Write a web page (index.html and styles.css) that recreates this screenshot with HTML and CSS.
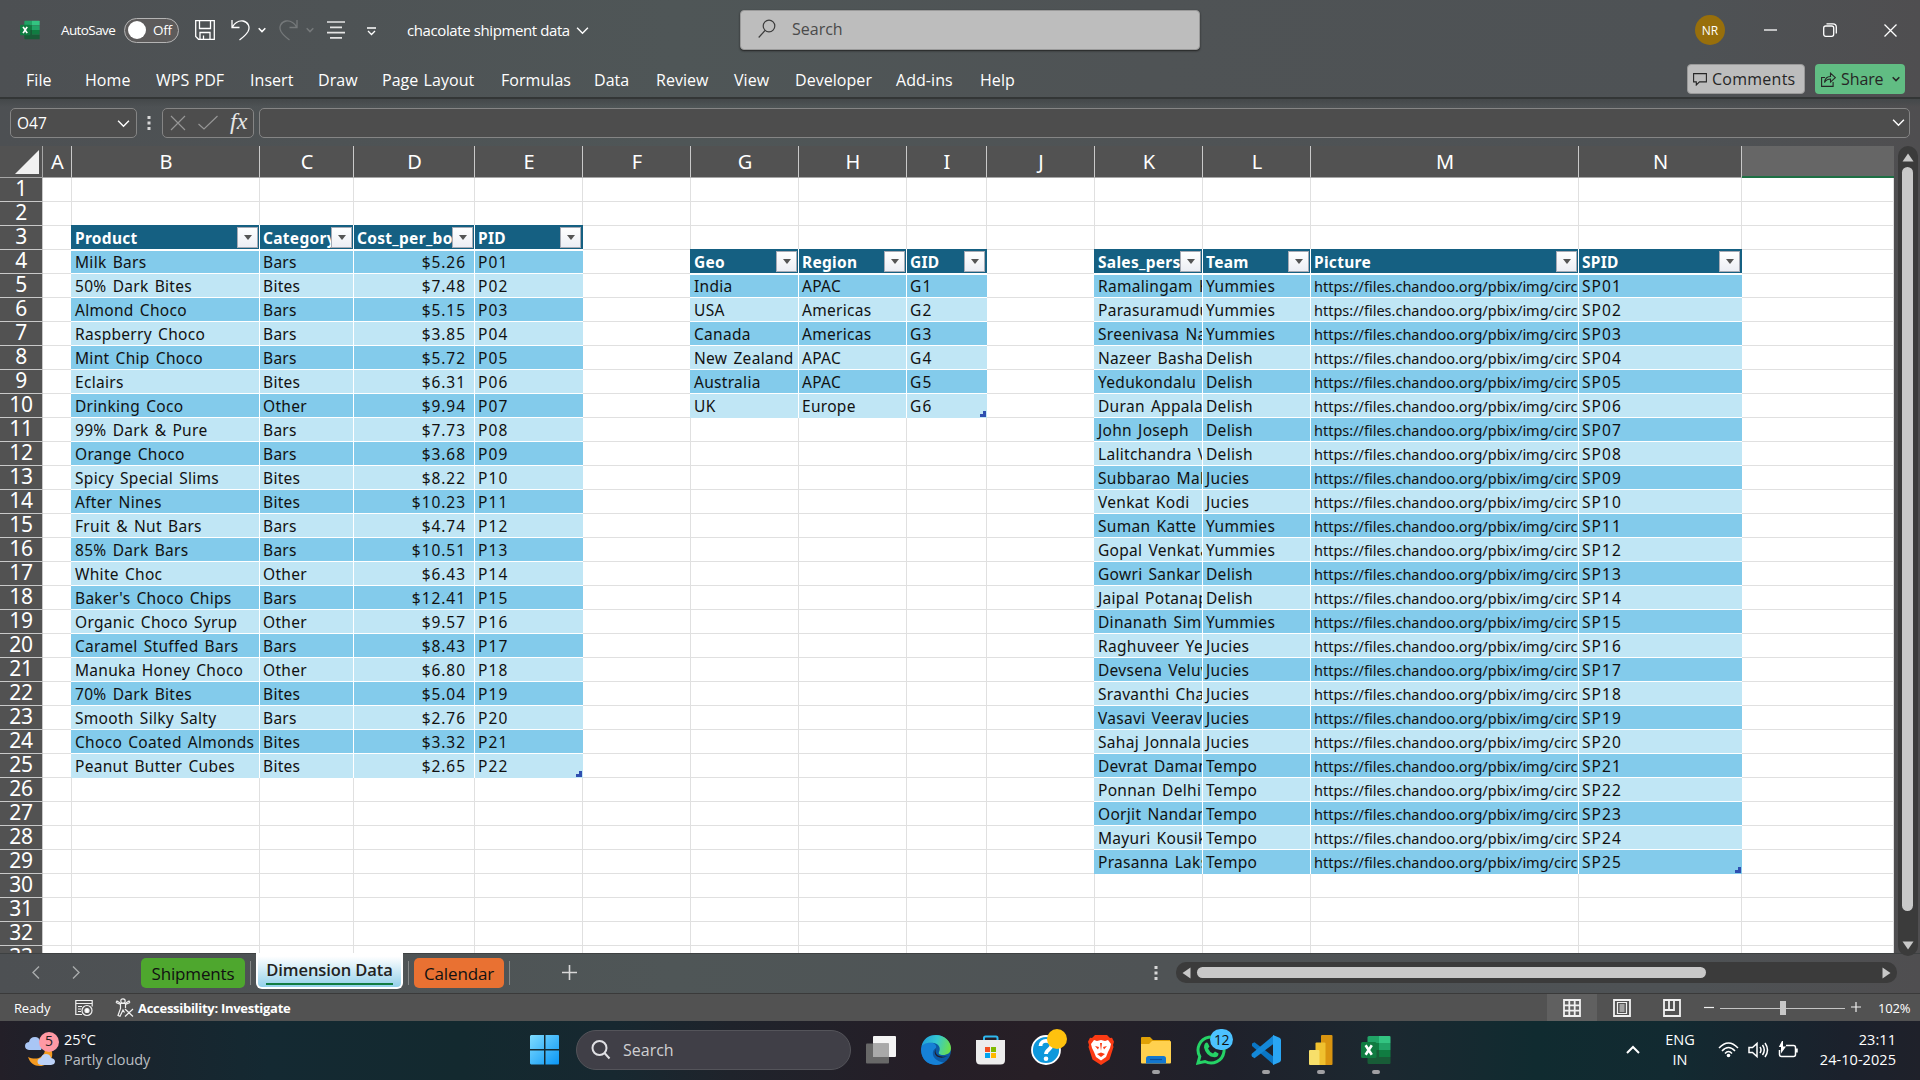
FILE: index.html
```
<!DOCTYPE html>
<html lang="en">
<head>
<meta charset="utf-8">
<title>chacolate shipment data - Excel</title>
<link rel="stylesheet" href="styles.css">
</head>
<body>
<svg class="defs" width="0" height="0" aria-hidden="true">
  <defs>
    <symbol id="excel" viewBox="0 0 30 30">
      <path fill="#21a366" d="M8 1h10v7H6.500V2.500Q6.500 1 8 1z"/>
      <path fill="#33c481" d="M18 1h10.500q1 0 1 1v6H18z"/>
      <path fill="#107c41" d="M6.500 8H18v7H6.500z"/>
      <path fill="#21a366" d="M18 8h11.500v7H18z"/>
      <path fill="#185c37" d="M6.500 15H18v7h11.500v6q0 1-1 1H8q-1.500 0-1.500-1.500z"/>
      <path fill="#107c41" d="M18 15h11.500v7H18z"/>
      <rect x="0" y="7" width="15.500" height="16" rx="1.500" fill="#107c41"/>
      <path fill="none" stroke="#fff" stroke-width="2.600" d="M4.600 10.300l6.200 9.400M10.800 10.300l-6.200 9.400"/>
    </symbol>
    <symbol id="chev" viewBox="0 0 12 12"><path d="M1 3.500l5 5 5-5" fill="none" stroke="currentColor" stroke-width="1.300"/></symbol>
    <symbol id="chevs" viewBox="0 0 8 8"><path d="M.7 2.200L4 5.600l3.300-3.400" fill="none" stroke="currentColor" stroke-width="1.500"/></symbol>
  </defs>
</svg>

<div class="window">
  <header class="titlebar">
    <svg width="20" height="20"><use href="#excel"/></svg>
    <span class="autosave">AutoSave</span>
    <span class="toggle"><i></i><b>Off</b></span>
    <svg width="20" height="20" viewBox="0 0 20 20" class="line"><path d="M.7.700h18.600v18.600H3.500L.7 16.500zM4.500.700v7.800h11V.700M5 19v-6.500h10V19M8.500 19v-3.500"/></svg>
    <svg width="19" height="22" viewBox="0 0 19 22" class="line"><path d="M1 1v7.500h7.500M1.300 8.200C4 3.500 8 1.500 12 2c5 .8 7.500 6 5 10.500-1.500 2.500-4.500 5.500-8.500 8.500"/></svg>
    <svg width="8" height="8"><use href="#chevs"/></svg>
    <svg width="19" height="22" viewBox="0 0 19 22" class="line faint"><path d="M18 1v7.500h-7.500M17.700 8.200C15 3.500 11 1.500 7 2 2 2.800-.5 8 2 12.500c1.500 2.500 4.500 5.500 8.500 8.500"/></svg>
    <svg width="8" height="8" class="faint"><use href="#chevs"/></svg>
    <svg width="18" height="18" viewBox="0 0 18 18" class="line thick"><path d="M0 1h18M3 6.300h12M0 11.600h18M3 16.900h12"/></svg>
    <svg width="9" height="9" viewBox="0 0 9 9" class="line down"><path d="M0 1h9M1 4l3.500 3.500L8 4"/></svg>
    <span class="doc">chacolate shipment data</span>
    <svg width="13" height="13"><use href="#chev"/></svg>
    <div class="search">
      <svg width="18" height="20" viewBox="0 0 18 20"><circle cx="11" cy="7" r="5.800"/><path d="M7 11.500L.7 18.500"/></svg>
      <span>Search</span>
    </div>
    <span class="avatar">NR</span>
    <svg width="13" height="13" viewBox="0 0 13 13" class="line"><path d="M0 6h13"/></svg>
    <svg width="14" height="14" viewBox="0 0 14 14" class="line"><rect x=".7" y="3" width="10" height="10.300" rx="2"/><path d="M3.500.8h6.500q3.300 0 3.300 3.300v6.500"/></svg>
    <svg width="13" height="13" viewBox="0 0 13 13" class="line"><path d="M.5.500l12 12M12.500.500l-12 12"/></svg>
  </header>

  <nav class="ribbon">
    <div class="tabs">
      <span>File</span><span>Home</span><span>WPS PDF</span><span>Insert</span><span>Draw</span><span>Page Layout</span><span>Formulas</span><span>Data</span><span>Review</span><span>View</span><span>Developer</span><span>Add-ins</span><span>Help</span>
    </div>
    <button class="btn comments"><svg width="14" height="14" viewBox="0 0 14 14"><path d="M.6 1.600h12.800v8.300H6.500L3.300 13V9.900H.6z"/></svg>Comments</button>
    <button class="btn share"><svg width="15" height="15" viewBox="0 0 15 15"><path d="M4 5.500H.6v8.900h11.500V10M3.500 10.500C4 6.500 6 4.500 9.500 4.500V1.200l4.800 4.500-4.800 4.400V7C7 7 5 8 3.500 10.500z"/></svg>Share<svg width="8" height="8" class="sc"><use href="#chevs"/></svg></button>
  </nav>

  <section class="formulabar">
    <div class="namebox"><span>O47</span><svg width="13" height="13"><use href="#chev"/></svg></div>
    <svg class="dots" width="4" height="14" viewBox="0 0 4 14"><path d="M.5 0h3v3h-3zM.5 5.500h3v3h-3zM.5 11h3v3h-3z"/></svg>
    <div class="fx">
      <svg width="16" height="16" viewBox="0 0 16 16"><path d="M1 1l14 14M15 1L1 15"/></svg>
      <svg width="20" height="16" viewBox="0 0 20 16"><path d="M.5 9l5.500 5L19.500 1"/></svg>
      <em>fx</em>
    </div>
    <div class="formula"><svg width="13" height="13"><use href="#chev"/></svg></div>
  </section>

  <main class="workspace">
    <div class="sheet" id="sheet"></div>
    <div class="vscroll">
      <svg width="12" height="9" viewBox="0 0 12 9"><path d="M6 .5L11.500 8.500H.5z"/></svg>
      <i></i>
      <svg width="12" height="9" viewBox="0 0 12 9"><path d="M6 8.500L11.500.5H.5z"/></svg>
    </div>
  </main>

  <section class="tabbar">
    <svg class="arrow" width="8" height="13" viewBox="0 0 8 13"><path d="M7 .5L1 6.500l6 6"/></svg>
    <svg class="arrow" width="8" height="13" viewBox="0 0 8 13"><path d="M1 .5l6 6-6 6"/></svg>
    <span class="tab green">Shipments</span>
    <i class="sep"></i>
    <span class="tab active"><b>Dimension Data</b></span>
    <i class="sep"></i>
    <span class="tab orange">Calendar</span>
    <i class="sep"></i>
    <svg class="plus" width="15" height="15" viewBox="0 0 15 15"><path d="M7.500 0v15M0 7.500h15"/></svg>
    <svg class="dots" width="4" height="16" viewBox="0 0 4 14"><path d="M.5 0h3v3h-3zM.5 5.500h3v3h-3zM.5 11h3v3h-3z"/></svg>
    <div class="hscroll">
      <svg width="9" height="12" viewBox="0 0 9 12"><path d="M.5 6L8.500.5v11z"/></svg>
      <i></i>
      <svg width="9" height="12" viewBox="0 0 9 12"><path d="M8.500 6L.5.500v11z"/></svg>
    </div>
  </section>

  <footer class="status">
    <span>Ready</span>
    <svg width="18" height="18" viewBox="0 0 18 18"><path d="M7 15.500H.8V1.500h16.400v6M.8 4.500h16.400M3 7.500h4M3 10h3M3 12.500h3"/><circle cx="12" cy="11.500" r="5"/><circle cx="12" cy="11.500" r="2" fill="currentColor"/></svg>
    <svg width="19" height="19" viewBox="0 0 19 19"><circle cx="8" cy="3" r="2.200"/><path d="M1 4.500l4.500 2v4L3 17.500l2 .8L8 12l1.500 2.500M15 4.500l-4.500 2v3.500M1 4.500l1-1.500 4 2.500h4l4-2.500 1 1.500M10 11l8 7.500M18 11l-8 7.500"/></svg>
    <b>Accessibility: Investigate</b>
    <span class="view on"><svg width="18" height="18" viewBox="0 0 18 18" class="bold"><path d="M1 1h16v16H1zM6.300 1v16M11.700 1v16M1 6.300h16M1 11.700h16"/></svg></span>
    <span class="view"><svg width="18" height="18" viewBox="0 0 18 18"><path class="w2" d="M1 1h16v16H1z"/><path d="M4.500 3.500h9v11h-9zM6.500 6h5M6.500 8h5M6.500 10h5M6.500 12h5"/></svg></span>
    <span class="view"><svg width="18" height="18" viewBox="0 0 18 18" class="bold"><path d="M1 1h16v16H1zM1 11h10V1M6 1v10"/></svg></span>
    <svg width="10" height="10" viewBox="0 0 10 10"><path d="M0 4.500h10"/></svg>
    <div class="slider"><i></i></div>
    <svg width="11" height="11" viewBox="0 0 11 11"><path d="M0 5h10M5 0v10"/></svg>
    <span>102%</span>
  </footer>
</div>

<div class="taskbar">
  <div class="weather">
    <svg width="34" height="38" viewBox="0 0 34 38">
      <path fill="#a9c6f5" d="M4 19q-4-.5-4-4 0-3.500 4-4 1-5 6-5 4 0 5 4l3 4-2 5z"/>
      <path fill="#f59a1f" d="M26 18c4 8-2 17-11 17-6 0-10-3-12-9 9 4 17 0 17-8z"/>
      <path fill="#bcd2f7" d="M16 34q-3.500-.5-3.500-3.500T16 27q1-4 5-4t5 4q4 .5 4 3.500T26 34z"/>
      <circle cx="24" cy="11" r="10" fill="#ff99a4"/>
    </svg>
    <span class="count">5</span>
    <div class="wtext"><span>25°C</span><span class="dim">Partly cloudy</span></div>
  </div>
  <svg class="start" width="30" height="30" viewBox="0 0 30 30">
    <defs><linearGradient id="win" x1="0" y1="0" x2="1" y2="1" ><stop offset="0" stop-color="#7fdcff"/><stop offset="1" stop-color="#0a96f5"/></linearGradient></defs>
    <path fill="url(#win)" d="M1 0h13v14H0V1zM15.500 0H28.500l.5 1v13H15.500zM0 15.500h14V29.500H1L0 28.500zM15.500 15.500H29v13l-.5 1h-13z"/>
  </svg>
  <div class="tsearch">
    <svg width="20" height="20" viewBox="0 0 20 20"><circle cx="8.500" cy="8" r="7"/><path d="M13.500 13l5 5.500"/></svg>
    <span>Search</span>
  </div>
  <div class="apps">
    <span class="app"><svg width="30" height="30" viewBox="0 0 30 30">
      <rect x="7" y="1" width="23" height="21" rx="1" fill="#f4f4f4"/><rect x="0" y="8.500" width="23" height="20" rx="1" fill="#686868"/><rect x="7" y="8.500" width="16" height="13.500" fill="#a9a9a9"/></svg></span>
    <span class="app"><svg width="30" height="30" viewBox="0 0 30 30">
      <defs><linearGradient id="e1" x1="0" y1=".3" x2="1" y2=".5"><stop offset="0" stop-color="#1f9fdc"/><stop offset=".5" stop-color="#35c8d0"/><stop offset="1" stop-color="#6be04c"/></linearGradient></defs>
      <circle cx="15" cy="15" r="15" fill="#0c59a4"/>
      <path fill="#1681d6" d="M0 15C0 8 7 6 12 8q4 2 3 5-4 2-3 7c1 4 6 7 11 7.500Q19 30 15 30 1 29 0 15z"/>
      <path fill="url(#e1)" d="M.3 12Q3 0 15 0C24 0 30 7 30 13c0 5-4 7-8 7-3 0-5-1-4-3 2-4 0-8-5-9C8 7 2 8 .3 12z"/>
      <path fill="#231d27" d="M15 13q-2 5 2 7.500 4 2 9.500.5-6 3-10.500.500-4-3-1-8.500z"/></svg></span>
    <span class="app"><svg width="30" height="30" viewBox="0 0 30 30">
      <path fill="none" stroke="#2fb9f0" stroke-width="2" d="M8 7V3q0-1.500 1.500-1.500h10.500q1.500 0 1.500 1.500v4"/><path fill="#ededed" d="M0 5h29v20q0 4.500-4.500 4.500h-20Q0 29.500 0 25z"/>
      <path fill="#f25022" d="M9 12h5v5H9z"/><path fill="#7fba00" d="M15 12h5v5h-5z"/><path fill="#00a4ef" d="M9 18h5v5H9z"/><path fill="#ffb900" d="M15 18h5v5h-5z"/></svg></span>
    <span class="app"><svg width="30" height="30" viewBox="0 0 30 30"><circle cx="15" cy="15" r="14" fill="#0e98dc" stroke="#fff" stroke-width="1.800"/><path d="M9.500 11c0-7 11-6.500 11-.5 0 4-5.500 4-5.500 8.500" fill="none" stroke="#fff" stroke-width="3.800"/><circle cx="15" cy="23.800" r="2.300" fill="#fff"/></svg><b class="dot"></b></span>
    <span class="app"><svg width="26" height="30" viewBox="0 0 26 30"><path fill="#fb3b14" d="M7 0h12l3 3 2-.2 2 4-1 3.200.5 2-4 12.500L13 30 4.500 24.500.500 12 1 10 0 6.800l2-4L4 3z"/><path fill="#fff" d="M6 5l3 1 4-1 4 1 3-1 3 4-1 4-2 4-2 5-5 3.500-5-3.500-2-5-2-4-1-4z"/><path fill="#fb3b14" d="M7 11l4 1-1 2.500zM19 11l-4 1 1 2.500zM9 19l4-1.500 4 1.500-4 3zM12 8h2l-1 8z"/></svg></span>
    <span class="app run"><svg width="30" height="30" viewBox="0 0 30 30"><path fill="#e0a106" d="M0 3q0-1 1-1h8l3 3H29v4H0z"/><path fill="#ffd14f" d="M0 9h8l3-3h18q1 0 1 1v20.500q0 1-1 1H1q-1 0-1-1z"/><path fill="#1377cf" d="M5 28.500v-5Q5 21 7.500 21h15q2.500 0 2.500 2.500v5z"/><path stroke="#0b4f9c" stroke-width="1.200" d="M9 24.500h12"/></svg></span>
    <span class="app"><svg width="30" height="30" viewBox="0 0 30 30"><path fill="none" stroke="#25d366" stroke-width="3" d="M2 28l1.800-6.500A13 13 0 1 1 9 26.500z"/><path fill="#25d366" d="M9 8.500q2-2 3 0l1.500 3-1.500 2q1.500 3.500 5 5l2-2 3.500 2q0 3.500-4 3.800Q10 21.500 8 12.500q0-2.500 1-4z"/></svg><b class="badge">12</b></span>
    <span class="app run"><svg width="30" height="30" viewBox="0 0 30 30"><path fill="#0a76c4" d="M1 8.500l2.500-1.300L23 22v8L1 11z"/><path fill="#1488d8" d="M1 21.500l2.500 1.800L23 8.500V0L1 18.500q-1 1.500 0 3z"/><path fill="#2aa6f4" d="M22 0l6.500 2.800Q30 3.500 30 5v20q0 1.500-1.500 2.200L22 30z"/></svg></span>
    <span class="app run"><svg width="24" height="30" viewBox="0 0 24 30"><path fill="#d99410" d="M12 1q0-1 1-1h9.500q1 0 1 1v28q0 1-1 1H12z"/><path fill="#f0c12f" d="M6.500 8.500q0-1 1-1h8q1 0 1 1V30h-10z"/><path fill="#f7df6a" d="M0 16q0-1 1-1h8.500q1 0 1 1v14H1q-1 0-1-1z"/></svg></span>
    <span class="app run"><svg width="30" height="30"><use href="#excel"/></svg></span>
  </div>
  <div class="tray">
    <svg width="14" height="9" viewBox="0 0 14 9"><path d="M1 8l6-6 6 6" stroke-width="2"/></svg>
    <div class="two lang"><span>ENG</span><span>IN</span></div>
    <svg width="21" height="17" viewBox="0 0 21 17"><path d="M1 7q9.500-10 19 0M4 10q6.500-7 13 0M7 12.500q3.500-4 7 0"/><circle cx="10.500" cy="14.500" r="1.800" class="fill"/></svg>
    <svg width="21" height="18" viewBox="0 0 21 18"><path d="M1 6.500h3.500L9 2.500v13L4.500 11.500H1zM12 6q2 3 0 6M14.500 4q3.500 5 0 10M17 2q5 7 0 14"/></svg>
    <svg width="21" height="18" viewBox="0 0 21 18"><path d="M8 4.500h7.500q2 0 2 2v7q0 2-2 2H3.500q-2 0-2-2V9M19 7.500v4"/><path class="fill" d="M4 0L.8 6H3v6.500L8 5.500H5V0z"/></svg>
    <div class="two clock"><span>23:11</span><span>24-10-2025</span></div>
  </div>
</div>
<script src="script.js"></script>
</body>
</html>
```
FILE: styles.css
```
* { box-sizing: border-box; }
body {
  margin: 0; width: 1920px; height: 1080px; overflow: hidden;
  font-family: "Open Sans", "Noto Sans", sans-serif; font-size: 14px; color: #fff; background: #4f5355;
}
.defs { position: absolute; }
svg { display: block; flex: none; }
.window { height: 1021px; display: flex; flex-direction: column; background: linear-gradient(90deg, #4d5053, #4f5657 35%, #4f5355 60%, #4e5255 88%, #4f4e50); }

.titlebar {
  height: 60px; padding-left: 20px; display: grid; align-items: center; justify-items: start;
  grid-template-columns: 41px 63px 71px 36px 27px 21px 27px 21px 40px 40px 169px 164px 955px 69px 59px 61px 20px;
}
.line { fill: none; stroke: #fff; stroke-width: 1.3; }
.thick { stroke-width: 1.7; stroke: #e4e4e4; }
.faint { opacity: .22; }
.down { margin-top: 3px; }
.autosave { font-size: 13.5px; letter-spacing: -.6px; white-space: nowrap; }
.toggle { width: 55px; height: 25px; border: 1px solid #b4b4b4; border-radius: 13px; display: flex; align-items: center; background: #5d5b5b; }
.toggle i { width: 18px; height: 18px; border-radius: 50%; background: #fff; margin: 0 7px 0 3px; }
.toggle b { font-weight: 400; font-size: 13.5px; letter-spacing: -.3px; }
.doc { font-size: 15px; white-space: nowrap; letter-spacing: -.4px; }
.search { width: 460px; height: 40px; border-radius: 4px; background: #bdbdbd; border: 1px solid #9a9a9a; box-shadow: 0 1px 2px #222; display: flex; align-items: center; padding: 0 0 2px 17px; gap: 16px; color: #4a4a4a; font-size: 16px; }
.search svg { fill: none; stroke: #3c3c3c; stroke-width: 1.2; }
.avatar { width: 30px; height: 30px; border-radius: 50%; background: #986f0b; font-size: 12px; display: flex; align-items: center; justify-content: center; }

.ribbon { height: 39px; display: flex; border-bottom: 2px solid #333636; padding: 4px 15px 0 26px; }
.tabs { flex: 1; display: grid; line-height: 32px; font-size: 16px; white-space: nowrap; letter-spacing: .05px; word-spacing: 1px;
  grid-template-columns: 59px 71px 94px 68px 64px 119px 93px 62px 78px 61px 101px 84px 60px; }
.btn { height: 30px; border: 0; border-radius: 4px; font: 16px "Open Sans", sans-serif; display: flex; align-items: center; padding: 0 0 0 6px; gap: 6px; color: #262626; letter-spacing: -.1px; white-space: nowrap; }
.btn svg { fill: none; stroke: #262626; stroke-width: 1.1; }
.comments { width: 118px; background: #bdbdbd; border: 1px solid #999; margin-right: 10px; padding-left: 5px; letter-spacing: .25px; gap: 5px; }
.share { width: 90px; background: #61bd83; gap: 5px; }
.share .sc { margin-left: 3px; }

.formulabar { height: 47px; padding: 9px 10px 8px; display: flex; align-items: center; background: linear-gradient(#44484a, rgba(0,0,0,0) 8px); }
.namebox, .fx, .formula { height: 30px; border: 1px solid #858585; border-radius: 5px; background: #4d4d4d; display: flex; align-items: center; }
.namebox { width: 127px; justify-content: space-between; padding: 0 6px; font-size: 15.5px; letter-spacing: 0; }
.dots { fill: #d8d8d8; margin: 0 11px 0 10px; }
.fx { width: 92px; padding-left: 7px; margin-right: 5px; }
.fx svg { fill: none; stroke: #969696; stroke-width: 1.2; margin-right: 12px; }
.fx em { font: italic 24px/24px "Liberation Serif", serif; color: #e6e6e6; margin-top: -4px; }
.formula { flex: 1; justify-content: flex-end; padding-right: 4px; }
.formula svg { margin-bottom: 2px; }

.workspace { height: 807px; display: flex; }
.sheet {
  width: 1894px; height: 807px; overflow: hidden; display: grid; background: #fff; color: #111;
  grid-template-columns: 43px 29px 188px 94px 121px 108px 108px 108px 108px 80px 108px 108px 108px 268px 163px 152px;
  grid-template-rows: 32px; grid-auto-rows: 24px;
  font: 16px/24px "Noto Sans", sans-serif;
}
.sheet > div { border-right: 1px solid #e0e0e0; border-bottom: 1px solid #e0e0e0; white-space: nowrap; overflow: hidden; min-width: 0; }
.sheet > .colhead { background: #525252; color: #fff; border-color: #a6a6a6; border-right-color: #c9c9c9; text-align: center; font: 20px/31px "Noto Sans", sans-serif; padding-left: 1px; }
.sheet > .colhead.sel { background: #666; border-bottom: 2px solid #1d7044; border-right: 0; }
.sheet > .corner { background: #525252; border-color: #a6a6a6; display: flex; align-items: flex-end; justify-content: flex-end; padding: 0 3px 3px 0; }
.corner svg { fill: #f1f1f1; }
.sheet > .rowhead { background: #525252; color: #fff; border-color: #c9c9c9; text-align: center; font: 21px/20px "Noto Sans", sans-serif; letter-spacing: -.3px; }
.sheet > .cell { padding-left: 3px; border-color: #fff; font-size: 15.5px; line-height: 24px; letter-spacing: .3px; word-spacing: 1.8px; }
.sheet > .odd { background: #83cbeb; }
.sheet > .even { background: #c0e6f5; }
.sheet > .id { letter-spacing: 1.1px; }
.sheet > .num { text-align: right; padding-right: 8px; letter-spacing: .95px; }
.sheet > .url { font-size: 14.5px; letter-spacing: 0; }
.sheet > .th { background: #156082; color: #fff; font-weight: 700; margin-top: -1px; border-bottom: 1px solid #fff; display: flex; justify-content: space-between; padding-right: 1px; }
.sheet > .th span { overflow: hidden; line-height: 26px; }
.sheet > .first { margin-left: -1px; padding-left: 4px; }
.sheet > .afterhead { border-top: 1px solid #fff; line-height: 22px; }
.sheet > .lastrow { border-bottom: 0; }
.sheet > .lastcol { border-right: 0; }
.sheet > .th.lastcol { padding-right: 2px; }
.lastrow.lastcol { background-image: linear-gradient(#2f4fb0, #2f4fb0), linear-gradient(#2f4fb0, #2f4fb0); background-size: 6px 3px, 3px 6px; background-position: right 1px bottom 1px; background-repeat: no-repeat; }
.filter { flex: none; width: 21px; height: 21px; margin-top: 2px; background: linear-gradient(#fff, #eceef4); border: 1px solid #a8abb5; display: flex; align-items: center; justify-content: center; }
.filter svg { fill: #555; }
.vscroll { width: 20px; height: 810px; margin: 0 2px 0 4px; border-radius: 10px; background: #3b3b3b; display: flex; flex-direction: column; align-items: center; padding: 7px 1px 6px 0; flex: none; z-index: 1; }
.vscroll svg, .hscroll svg { fill: #c8c8c8; }
.vscroll i { width: 11px; height: 744px; border-radius: 6px; background: #c8c8c8; margin: 5px 0 auto; }

.tabbar { height: 41px; border-bottom: 1px solid #3a3a3a; border-top: 1px solid #3e4142; display: flex; align-items: flex-start; padding-left: 32px; font-size: 17px; color: #111; }
.arrow { fill: none; stroke: #a9abac; stroke-width: 1.4; margin: 12px 32px 0 0; }
.arrow + .tab { margin-left: 29px; }
.tab { height: 30px; margin-top: 4px; border-radius: 5px; display: flex; align-items: center; justify-content: center; white-space: nowrap; letter-spacing: -.15px; }
.green { width: 104px; background: #4ea72e; }
.orange { width: 90px; background: #e97132; }
.sep { width: 1px; height: 24px; background: #858888; margin: 7px 5px 0; }
.active { width: 147px; height: 36px; margin-top: -1px; background: linear-gradient(#fff 10%, #93d0ea); border: 2px solid #fff; border-top: 0; border-radius: 0 0 6px 6px; align-items: flex-start; }
.active b { font-weight: 600; width: 127px; font-size: 16.5px; line-height: 33px; height: 32px; border-bottom: 2px solid #107c41; letter-spacing: -.1px; display: flex; justify-content: center; color: #222; }
.plus { fill: none; stroke: #d8d8d8; stroke-width: 1.6; margin: 11px 0 0 47px; }
.tabbar .dots { margin: 11px 18px 0 577px; }
.hscroll { width: 721px; height: 21px; margin-top: 8px; border-radius: 10px; background: #3b3b3b; display: flex; align-items: center; padding: 0 6px; }
.hscroll i { width: 509px; height: 11px; border-radius: 6px; background: #c8c8c8; margin: 0 auto 0 6px; }

.status { height: 27px; background: #525252; padding-left: 14px; display: grid; align-items: center; font-size: 13px; letter-spacing: -.15px; white-space: nowrap;
  grid-template-columns: 61px 40px 23px 1409px 50px 50px 57px 16px 131px 27px 50px; }
.status svg { fill: none; stroke: #f0f0f0; stroke-width: 1.2; }
.status svg.bold, .status .w2 { stroke-width: 1.8; }
.status b { font-weight: 700; letter-spacing: -.28px; }
.view { height: 27px; width: 50px; display: flex; align-items: center; justify-content: center; }
.view.on { background: #606060; }
.slider { width: 125px; height: 14px; background: linear-gradient(#c4c4c4, #c4c4c4) 0 7px / 125px 1px no-repeat; padding-left: 60px; }
.slider i { display: block; width: 6px; height: 14px; background: #c8c8c8; }

.taskbar { height: 59px; padding-bottom: 2px; display: flex; align-items: center; background: linear-gradient(90deg, #231f28, #1b232c 5%, #142932 14%, #13292f 24%, #172830 32%, #1f232b 38%, #251e27 48%, #271f26 54%, #1f212b 64%, #1c2830 72%, #102b30 80%, #122a31 87%, #1b212c 96%, #1f212a); }
.weather { width: 505px; margin-left: 25px; display: flex; align-items: center; gap: 5px; position: relative; }
.count { position: absolute; left: 20px; top: 1px; color: #222; font-size: 14px; line-height: 20px; }
.wtext, .two { display: flex; flex-direction: column; font-size: 14.5px; line-height: 20px; letter-spacing: -.05px; }
.dim { color: #b9bec2; }
.tsearch { width: 275px; height: 40px; margin: 0 15px 0 16px; border: 1px solid #54545a; border-radius: 20px; background: #403f47; display: flex; align-items: center; gap: 12px; padding-left: 14px; font-size: 16px; color: #cfcfd2; }
.tsearch svg { fill: none; stroke: #e0e0e4; stroke-width: 2; }
.apps { display: flex; gap: 25px; width: 760px; }
.app { width: 30px; height: 30px; display: flex; justify-content: center; position: relative; }
.run::after { content: ""; position: absolute; left: 11px; top: 35px; width: 8px; height: 4px; border-radius: 2px; background: #a0a0a3; }
.dot { position: absolute; left: 16px; top: -6px; width: 20px; height: 20px; border-radius: 50%; background: #ffc20e; }
.badge { position: absolute; left: 14px; top: -6px; width: 23px; height: 21px; border-radius: 11px; background: #4cc2ff; color: #111; font: 14px/21px "Open Sans", sans-serif; letter-spacing: -.5px; text-align: center; }
.tray { display: flex; align-items: center; flex: 1; }
.tray svg { fill: none; stroke: #fff; stroke-width: 1.5; margin-right: 9px; }
.tray .fill { fill: #fff; stroke: none; }
.lang { width: 40px; text-align: center; margin: 0 18px 0 11px; }
.clock { flex: 1; text-align: right; padding-right: 24px; letter-spacing: .05px; }
```
FILE: script.js
```
const url = "https://files.chandoo.org/pbix/img/circle/";
const products = `Milk Bars|Bars|$5.26
50% Dark Bites|Bites|$7.48
Almond Choco|Bars|$5.15
Raspberry Choco|Bars|$3.85
Mint Chip Choco|Bars|$5.72
Eclairs|Bites|$6.31
Drinking Coco|Other|$9.94
99% Dark & Pure|Bars|$7.73
Orange Choco|Bars|$3.68
Spicy Special Slims|Bites|$8.22
After Nines|Bites|$10.23
Fruit & Nut Bars|Bars|$4.74
85% Dark Bars|Bars|$10.51
White Choc|Other|$6.43
Baker's Choco Chips|Bars|$12.41
Organic Choco Syrup|Other|$9.57
Caramel Stuffed Bars|Bars|$8.43
Manuka Honey Choco|Other|$6.80
70% Dark Bites|Bites|$5.04
Smooth Silky Salty|Bars|$2.76
Choco Coated Almonds|Bites|$3.32
Peanut Butter Cubes|Bites|$2.65`.split("\n").map((r, i) => [...r.split("|"), "P" + String(i + 1).padStart(2, "0")]);
const geos = [["India", "APAC"], ["USA", "Americas"], ["Canada", "Americas"], ["New Zealand", "APAC"], ["Australia", "APAC"], ["UK", "Europe"]]
  .map((r, i) => [...r, "G" + (i + 1)]);
const people = `Ramalingam K|Yummies
Parasuramudu|Yummies
Sreenivasa Na|Yummies
Nazeer Basha|Delish
Yedukondalu|Delish
Duran Appala|Delish
John Joseph|Delish
Lalitchandra V|Delish
Subbarao Mal|Jucies
Venkat Kodi|Jucies
Suman Katte|Yummies
Gopal Venkata|Yummies
Gowri Sankar|Delish
Jaipal Potanap|Delish
Dinanath Sim|Yummies
Raghuveer Yet|Jucies
Devsena Veluv|Jucies
Sravanthi Cha|Jucies
Vasavi Veerava|Jucies
Sahaj Jonnala|Jucies
Devrat Daman|Tempo
Ponnan Delhi|Tempo
Oorjit Nandan|Tempo
Mayuri Kousik|Tempo
Prasanna Laks|Tempo`.split("\n").map((r, i) => [...r.split("|"), url, "SP" + String(i + 1).padStart(2, "0")]);

// row/col are the 1-based sheet coordinates of each table's header
const tables = [
  { row: 3, col: 2, head: ["Product", "Category", "Cost_per_box", "PID"], rows: products },
  { row: 4, col: 7, head: ["Geo", "Region", "GID"], rows: geos },
  { row: 4, col: 11, head: ["Sales_person", "Team", "Picture", "SPID"], rows: people },
];
const sheet = document.getElementById("sheet");
const add = (cls, text = "") => {
  const d = document.createElement("div");
  d.className = cls;
  d.textContent = text;
  sheet.append(d);
  return d;
};
add("corner").innerHTML = '<svg width="24" height="24"><path d="M24 0v24H0z"/></svg>';
for (let c = 1; c <= 15; c++) add(c === 15 ? "colhead sel" : "colhead", c === 15 ? "" : String.fromCharCode(64 + c));
for (let r = 1; r <= 33; r++) {
  add("rowhead", r);
  for (let c = 1; c <= 15; c++) {
    const t = tables.find(t => c >= t.col && c < t.col + t.head.length && r >= t.row && r <= t.row + t.rows.length);
    if (!t) { add(""); continue; }
    const i = r - t.row, j = c - t.col;
    let cls = "cell";
    if (j === 0) cls += " first";
    if (j === t.head.length - 1) cls += " lastcol";
    if (i === 0) {
      add(cls + " th").innerHTML = `<span>${t.head[j]}</span><i class="filter"><svg width="8" height="5"><path d="M0 0h8L4 5z"/></svg></i>`;
      continue;
    }
    cls += i % 2 ? " odd" : " even";
    if (i === 1) cls += " afterhead";
    if (i === t.rows.length) cls += " lastrow";
    if (j === t.head.length - 1) cls += " id";
    const text = t.rows[i - 1][j];
    if (text[0] === "$") cls += " num";
    if (text === url) cls += " url";
    add(cls, text);
  }
}
```
